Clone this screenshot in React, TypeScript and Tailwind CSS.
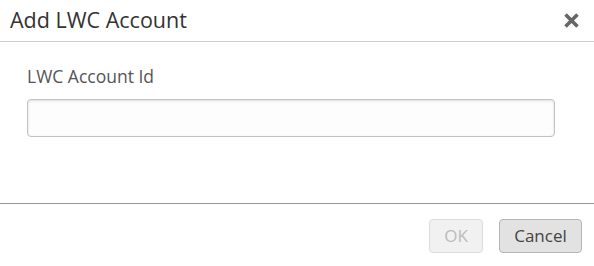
export default function App() {
  return (
    <div
      className="w-[594px] h-[266px] bg-white flex flex-col"
      style={{ fontFamily: '"Open Sans", "Noto Sans", sans-serif' }}
    >
      {/* Header */}
      <div className="h-[42px] flex items-center justify-between pl-[10px] pr-[14px] border-b border-[#cccccc]">
        <h2 className="text-[21.5px] leading-none text-[#333333] pb-[2px]">Add LWC Account</h2>
        <button className="w-[17px] h-[17px] flex items-center justify-center text-[#666666]" aria-label="Close">
          <svg width="17" height="17" viewBox="0 0 17 17">
            <path d="M2.5 2.5 L14.5 14.5 M14.5 2.5 L2.5 14.5" stroke="currentColor" strokeWidth="3.6" strokeLinecap="butt" />
          </svg>
        </button>
      </div>

      {/* Body */}
      <div className="h-[162px] pl-[27px] pt-[22px] border-b border-[#999999]">
        <label className="block text-[17.5px] leading-[24px] text-[#555555]">LWC Account Id</label>
        <input
          type="text"
          className="mt-[11px] w-[528px] h-[38px] rounded-[4px] border border-[#c2c2c2] bg-[#fdfdfd] shadow-[inset_0_1px_3px_rgba(0,0,0,0.12)] outline-none px-2 text-[14px]"
        />
      </div>

      {/* Footer */}
      <div className="flex justify-end gap-[16px] pt-[15px] pr-[12px]">
        <button
          disabled
          className="w-[54px] h-[34px] rounded-[4px] border border-[#dddddd] bg-[#f1f1f1] text-[17px] text-[#bbbbbb]"
        >
          OK
        </button>
        <button className="w-[83px] h-[34px] rounded-[4px] border border-[#b5b5b5] bg-[#e2e2e2] text-[17px] text-[#444444]">
          Cancel
        </button>
      </div>
    </div>
  );
}
